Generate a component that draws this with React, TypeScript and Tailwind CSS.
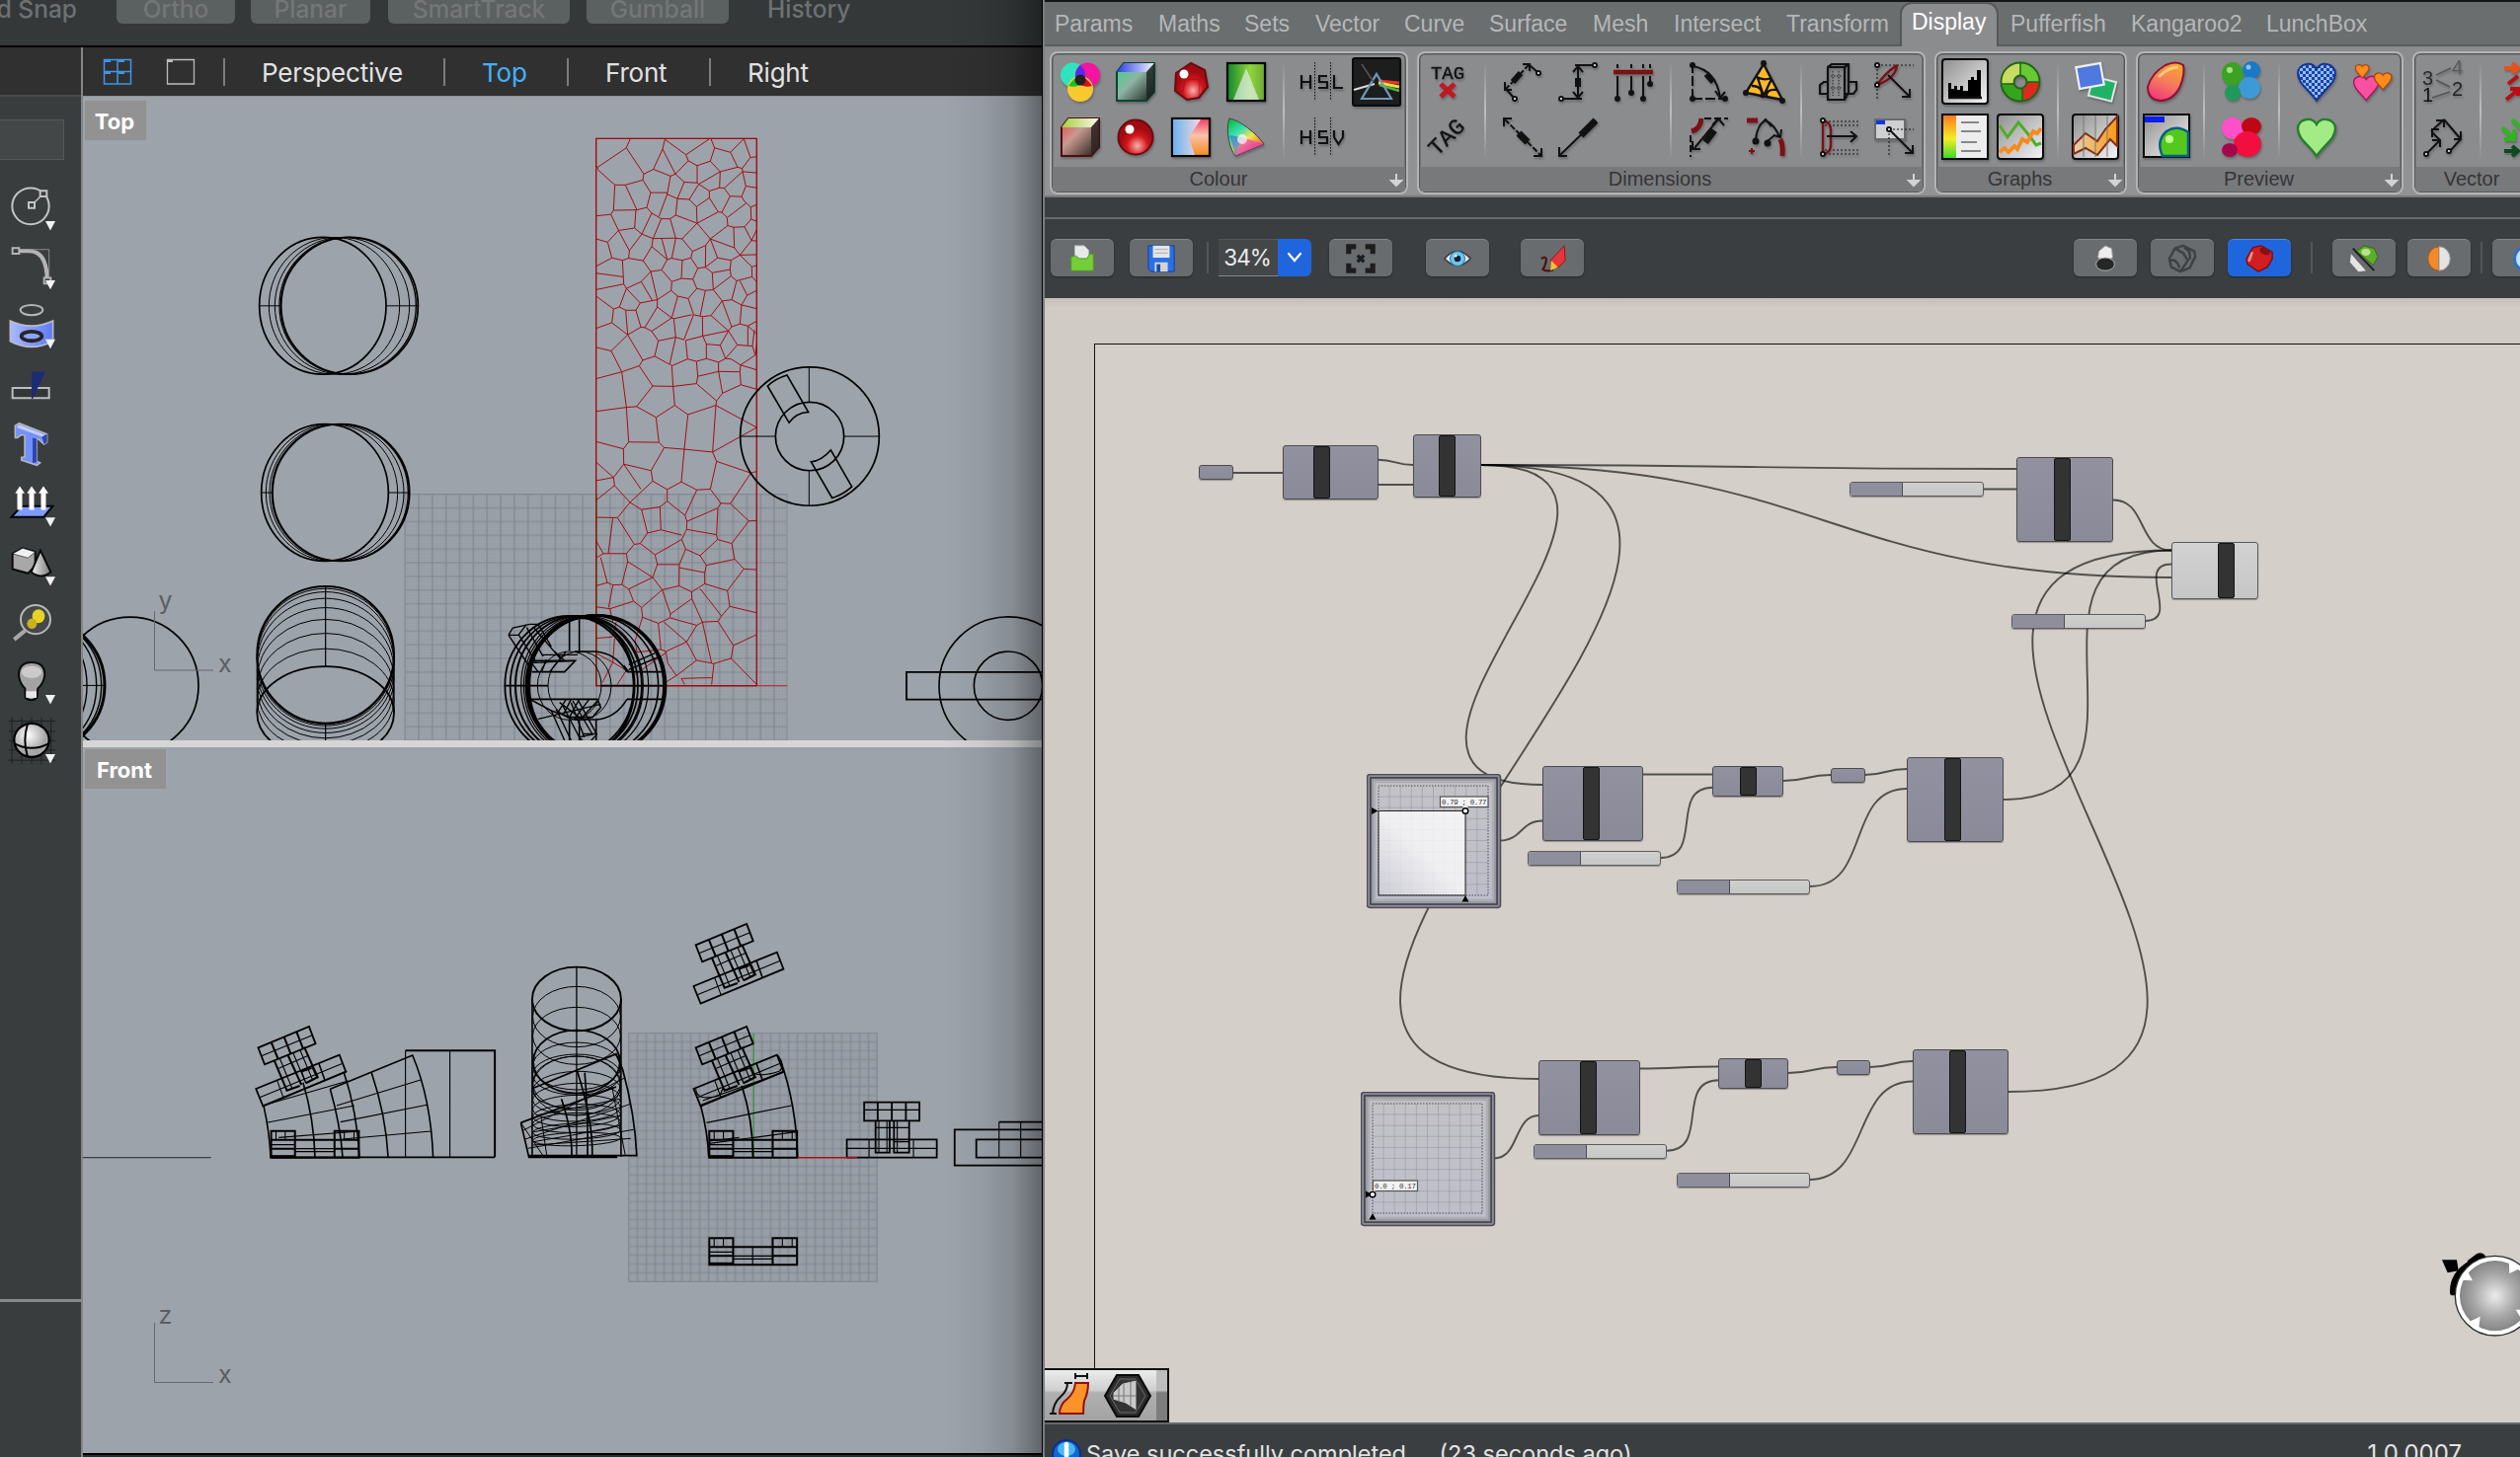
import React from "react";

/* ---------- Modelling window: tool strip ---------- */

const Flyout = ({ y }: { y: number }) => <path d={`M138 ${y} H168 L153 ${y + 20} Z`} fill="#f2f2f2" stroke="none" />;

const toolIcons: React.ReactNode[] = [
  <g key="circle" stroke="#c4c4c4" strokeWidth="2">
    <ellipse cx="93" cy="273" rx="56" ry="39" />
    <path d="M96 271 L132 246" strokeWidth="1.4" />
    <rect x="87" y="265" width="18" height="12" fill="#3a3d3e" />
    <rect x="122" y="240" width="20" height="12" fill="#3a3d3e" />
    <Flyout y={305} />
  </g>,
  <g key="fillet" stroke="#b4b4b4">
    <path d="M58 369 H90 Q143 371 143 432" strokeWidth="4" />
    <path d="M90 366 H149 V430" strokeWidth="1" stroke="#8a8a8a" />
    <rect x="38" y="363" width="20" height="12" fill="#3a3d3e" strokeWidth="2" />
    <rect x="134" y="427" width="20" height="12" fill="#3a3d3e" strokeWidth="2" />
    <Flyout y={432} />
  </g>,
  <g key="surface">
    <ellipse cx="96" cy="496" rx="34" ry="11" stroke="#b4b4b4" strokeWidth="2" />
    <path d="M31 519 Q96 541 161 519 V563 Q96 587 31 563 Z" fill="url(#blueSheen)" stroke="#b9bcc6" strokeWidth="1.6" />
    <ellipse cx="96" cy="552" rx="31" ry="10" stroke="#26262a" strokeWidth="3.8" fill="#8fa3fb" />
    <Flyout y={559} />
  </g>,
  <g key="trim">
    <rect x="38" y="663" width="111" height="22" stroke="#bdbdbd" strokeWidth="2" fill="#333637" />
    <path d="M96 628 H138 L99 687 H96 Z" fill="#1b2b74" />
  </g>,
  <g key="text" stroke="#b8b8b8" strokeWidth="1.5">
    <path d="M58 739 L143 762 V780 L134 784 L117 773 L112 772 V820 L122 824 L112 829 L65 818 V812 L75 811 V765 L64 764 L53 770 H46 L46 744 Z" fill="#7390ff" />
    <path d="M99 770 L112 772 V822 L99 824 Z M127 767 L143 762 V780 L134 784 Z" fill="#2c47ac" stroke="none" />
    <path d="M58 742 L138 764 L128 768 L50 748 Z" fill="#c3ccf6" stroke="none" />
  </g>,
  <g key="extrude">
    <path d="M35 940 L65 917 H160 L133 940 Z" fill="#7e9bff" stroke="#050505" strokeWidth="2" />
    <g stroke="#fff" strokeWidth="5"><path d="M60 925 V888 M96 925 V888 M132 925 V888" /></g>
    <path d="M46 889 L60 874 L75 889 Z M82 889 L96 874 L111 889 Z M117 889 L132 874 L147 889 Z" fill="#fff" />
    <Flyout y={941} />
  </g>,
  <g key="solids" stroke="#0a0a0a" strokeWidth="2">
    <path d="M38 1019 L69 1007 L107 1015 V1044 L85 1061 L38 1052 Z" fill="#a8a8a8" />
    <path d="M38 1019 L69 1007 L107 1015 L85 1028 Z" fill="#f0f0f0" strokeWidth="0.6" />
    <path d="M123 1012 L95 1058 Q125 1075 154 1058 Z" fill="url(#metal)" />
    <Flyout y={1068} />
  </g>,
  <g key="magnify">
    <ellipse cx="108" cy="1160" rx="45" ry="31" stroke="#b8b8b8" strokeWidth="2" fill="#45484a" />
    <ellipse cx="117" cy="1153" rx="19" ry="15" fill="#e6d326" />
    <ellipse cx="97" cy="1169" rx="15" ry="11" fill="#c9b21f" />
    <path d="M76 1184 L43 1203" stroke="#a8a8a8" strokeWidth="4" />
  </g>,
  <g key="light" stroke="#0a0a0a" strokeWidth="2">
    <path d="M57 1280 Q57 1252 96 1252 Q136 1252 136 1280 Q132 1298 115 1308 L112 1328 Q95 1338 77 1328 L76 1308 Q60 1298 57 1280 Z" fill="#a3a3a3" />
    <ellipse cx="96" cy="1273" rx="31" ry="13" fill="#cbcbcb" stroke="none" />
    <path d="M79 1314 H111 V1328 H79 Z" fill="#e8e8e8" stroke="none" />
    <Flyout y={1322} />
  </g>,
  <g key="render">
    <g stroke="#1f2122" strokeWidth="1">
      <path d="M26 1378 H168 M26 1400 H168 M26 1420 H168 M26 1440 H168 M26 1462 H168 M36 1370 V1470 M66 1370 V1470 M96 1370 V1470 M126 1370 V1470 M155 1370 V1470" />
    </g>
    <ellipse cx="96" cy="1419" rx="53" ry="36" fill="url(#ball)" stroke="#000" strokeWidth="2.2" />
    <path d="M43 1426 Q96 1446 149 1426 M84 1384 Q68 1420 84 1454" stroke="#000" strokeWidth="2" />
    <Flyout y={1449} />
  </g>,
];

const ToolStrip = () => (
  <aside className="flex w-[82px] shrink-0 flex-col bg-[#393d3e]">
    <div className="h-[50px] border-b-2 border-[#484a4b] bg-[#303030]" />
    <div className="mt-[23px] h-[41px] w-[65px] border border-l-0 border-[#565959] bg-[#444748]" />
    <div className="mt-[17px] flex flex-col">
      {toolIcons.map((icon, i) => (
        <svg key={i} className="block h-[60px] w-[82px] [&_*]:[vector-effect:non-scaling-stroke]" fill="none" preserveAspectRatio="none" viewBox={`0 ${209.8 + 127.1 * i} 246 127.1`}>
          {icon}
        </svg>
      ))}
    </div>
    <div className="mt-[537px] h-[3px] bg-[#878a8a]" />
  </aside>
);

/* ---------- Modelling window: viewports ---------- */

const voronoi =
  "M131 50H619V1408H131ZM235 50L223 73 136 121 131 118M136 121L136 127 188 165 220 165 273 153 276 138 223 73M276 138L305 126 333 76 340 52M333 76L372 138M305 126L357 143 372 138 411 105 404 90 340 52M404 90L475 51M480 51L491 73 478 106 438 117 411 105M491 73L539 84 578 52M580 51L600 97 619 95M539 84L561 121 575 124 600 97M478 106L508 132 561 121M575 124L576 132 619 135M576 132L520 173 506 172 508 132M438 117L438 160 443 163 508 132M443 163L475 180 506 172M438 160L399 158 372 138M399 158L378 199 347 188 357 143M378 199L414 201 443 163M347 188L345 184 297 184 273 153M297 184L285 221 255 227 220 165M255 227L184 228 188 165M184 228L176 238 131 242M176 238L199 278 248 272 252 227M285 221L300 235 329 249M347 188L322 243M300 235L270 287 248 272M270 287L232 328 199 278 166 307 131 299M166 307L179 346 131 367M179 346L211 352 230 347 232 328M211 352L215 411 131 425M131 384L213 393M215 411L223 422 202 468 184 473 131 441M223 422L268 405 297 380 274 353 230 347M274 353L300 318 304 298 270 287M304 298L329 249 356 249 373 240 378 199M356 249L373 297 304 298M373 240L438 260 436 219 414 201M436 219L475 197 475 180M475 197L502 232 438 260 478 299 531 266 529 246 513 233 502 232M513 233L538 193 520 173M538 193L573 194 586 168 576 132M586 168L619 172M573 194L582 206 601 220 619 214M529 246L586 211M601 220L602 250 582 269 549 270 531 266M602 250L619 255M549 270L551 321 478 299M582 269L603 303 619 276M603 303L619 304M603 303L568 339 551 321M568 339L619 338M568 339L541 352 500 346 478 299M478 299L464 315 424 330 392 299 373 297M392 299L438 260M464 315L463 369 500 346M424 330L419 346 440 372 463 369 484 383 538 375 541 352M419 346L393 352 361 347 373 297M361 347L347 350 332 303 330 299M347 350L300 318M393 352L390 397 425 399 440 372M347 350L330 376 297 380M330 376L361 405 390 397M361 405L359 427 317 450 297 380M268 405L302 452 317 450M302 452L265 458 223 422M265 458L252 476 221 476 202 468M252 476L267 518 279 519 317 468 317 450M221 476L227 537 267 518M184 473L179 507 227 537 177 577 131 568M179 507L131 521M359 427L379 441 361 495 317 468M379 441L411 447 437 422 425 399M437 422L463 427 487 425 484 383M487 425L541 391 538 375M541 391L558 403 605 393 604 368 568 339M604 368L619 365M605 393L619 406M558 403L543 450 514 453 487 425M568 403L590 439 619 427M590 439L573 463 543 450M573 463L619 472M573 463L568 510 592 515 619 503M568 510L543 517 514 453M514 453L480 489 454 492 427 487 411 447M463 427L447 490M361 495L367 497 422 487M367 497L373 543 398 549 427 487M454 492L455 540 403 551M455 540L533 527 480 489M533 527L543 517M533 527L508 563 466 560 455 540M533 527L560 562 606 565 612 525M592 515L592 563M606 565L615 587 619 560M592 515L619 535M560 562L524 596 508 563M524 596L541 597 570 612 615 587M524 596L503 605 466 596 466 560M466 596L436 603 409 597 403 551M409 597L361 614 355 608 373 543 320 552 300 528 279 519M300 528L361 495M320 552L309 590 273 600 262 614 209 629 177 577M273 600L227 537M309 590L355 611M262 614L303 664 365 665 361 614M303 664L254 715 223 717 209 629 131 646M223 717L131 727M223 717L230 803 214 820 131 802M230 803L322 804 313 742 254 715M313 742L370 712 365 665 436 658 440 640 436 603M440 640L503 628 503 605M503 628L568 629 570 612 619 624M568 629L571 661 619 672M571 661L515 682 503 628M515 682L497 701 436 658M497 701L495 712 410 735 370 712M495 712L619 767 485 828 399 821 410 735M495 712L485 828M322 804L338 817 399 821 390 902 347 921 303 900 298 874 338 817M298 874L215 858 214 820M215 858L184 891 131 853M184 891L131 899M184 891L187 911 234 953 303 900M215 858L267 920M187 911L131 948M234 953L196 991 131 990M234 953L269 971 325 964 347 950 347 921M347 950L401 985 437 922 390 902M437 922L478 920 497 851 485 828M497 851L601 880 619 876M601 880L539 956 510 955 478 920M510 955L501 967 407 1000 401 985M501 967L497 1033 406 1020 407 1000M539 956L595 999 619 998M595 999L543 1055 500 1045 497 1033M500 1045L447 1085 403 1069 391 1045 406 1020M391 1045L310 1083 265 1055 287 1029 269 971M287 1029L328 1021 325 964M328 1021L391 1034M265 1055L247 1057 196 991M247 1057L223 1080 153 1080 131 1048M182 991L168 1080M153 1080L131 1091M145 1090L165 1152 131 1160M165 1152L182 1158 209 1157 227 1100 223 1080M227 1100L303 1139 317 1107 310 1083M317 1107L384 1107 403 1069M384 1107L383 1160 332 1170 303 1139 230 1168 209 1157M384 1115L461 1127 466 1109 447 1085M466 1109L552 1094 543 1055M552 1094L580 1118 619 1120M580 1118L530 1172 461 1155 461 1127M461 1155L421 1175 383 1160M421 1175L422 1192 357 1230 332 1170 269 1214 245 1198 230 1168M245 1198L173 1217 131 1212M182 1158L169 1214M173 1217L182 1250M269 1214L272 1238 320 1253 355 1240 357 1230M357 1240L437 1258 454 1250 422 1192M447 1167L512 1235 537 1211 530 1172M537 1211L619 1227M512 1235L501 1248 454 1250 482 1352 436 1345 406 1299 437 1258M501 1248L548 1308 619 1281M548 1308L541 1340 489 1353 482 1352M541 1340L619 1405M489 1353L482 1405M482 1388L390 1390 400 1405M337 1250L406 1299 343 1323 328 1318 320 1253M343 1323L349 1352 375 1383 436 1345M375 1383L345 1398M272 1238L250 1295 255 1325 328 1318M131 1290L180 1287 192 1250M187 1290L182 1350 131 1327M182 1350L223 1370 195 1405M182 1350L150 1400M250 1380L345 1325";

/* Ellipse described by its left and right extents. */
const Span = ({ l, r, cy, ry, w = 1 }: { l: number; r: number; cy: number; ry: number; w?: number }) => (
  <ellipse cx={(l + r) / 2} cy={cy} rx={(r - l) / 2} ry={ry} strokeWidth={w} />
);

const GridPattern = ({ id, x, y, size }: { id: string; x: number; y: number; size: number }) => {
  const s = size / 5;
  return (
    <pattern id={id} x={x} y={y} width={size} height={size} patternUnits="userSpaceOnUse">
      <path d={`M${s} 0V${size}M${2 * s} 0V${size}M${3 * s} 0V${size}M${4 * s} 0V${size}M0 ${s}H${size}M0 ${2 * s}H${size}M0 ${3 * s}H${size}M0 ${4 * s}H${size}`} stroke="#91979f" strokeWidth="0.5" />
      <path d={`M0 0V${size}M${size} 0V${size}M0 0H${size}M0 ${size}H${size}`} stroke="#7f848e" strokeWidth="1.2" />
    </pattern>
  );
};

const TopView = () => (
  <svg className="block h-full w-full [&_*]:[vector-effect:non-scaling-stroke]" viewBox="84 98 972 652" preserveAspectRatio="none" fill="none" stroke="#000">
    <defs><GridPattern id="gridTop" x={604} y={694.7} size={13.85} /></defs>
    <rect x="410" y="500.5" width="387" height="250" fill="url(#gridTop)" stroke="#868b95" strokeWidth="1" />
    <g transform="matrix(.33333 0 0 .40816 560 120)">
      <path d="M133 932V1408" stroke="#2f9a35" strokeWidth="1.2" />
      <path d="M131 1408H712" stroke="#b23a40" strokeWidth="1.3" />
      <path d={voronoi} stroke="#a50d12" strokeWidth="1" />
      <path d="M131 50H619V1408H131Z" stroke="#a00a0e" strokeWidth="1.2" />
      <ellipse cx="780" cy="789" rx="211" ry="172" strokeWidth="1.7" />
      <ellipse cx="780" cy="789" rx="104" ry="85" strokeWidth="1.7" />
      <path d="M778 618V705M778 875V961M569 789H676M884 789H991" />
      <path d="M652 664Q675 646 711 637L776 729Q740 730 717 755ZM784 852Q815 850 844 823L908 914Q880 934 848 942Z" strokeWidth="1.6" />
      <ellipse cx="1383" cy="1408" rx="210" ry="171" strokeWidth="1.6" />
      <ellipse cx="1383" cy="1408" rx="104" ry="85" strokeWidth="1.6" />
      <path d="M1490 1374H1074V1442H1490" strokeWidth="1.8" />
    </g>
    <g transform="matrix(.33333 0 0 .4719 0 80)">
      <Span l={788} r={1173} cy={487} ry={147} w={1.7} />
      <Span l={817} r={1214} cy={487} ry={147} />
      <Span l={835} r={1244} cy={487} ry={147} />
      <Span l={849} r={1264} cy={487} ry={147} w={1.3} />
      <Span l={854} r={1270} cy={487} ry={147} w={1.8} />
      <path d="M788 487H852M1173 487H1270" />
      <Span l={794} r={1180} cy={888} ry={147} w={1.7} />
      <Span l={808} r={1208} cy={888} ry={147} />
      <Span l={819} r={1227} cy={888} ry={147} />
      <Span l={826} r={1240} cy={888} ry={147} w={1.3} />
      <Span l={828} r={1244} cy={888} ry={147} w={1.8} />
      <path d="M794 888H828M1180 888H1244" />
      <ellipse cx="989" cy="1236" rx="208" ry="147" strokeWidth="2" />
      {[1094, 1101, 1115, 1135, 1160, 1190, 1223].map((t) => {
        const ry = 147 - (47 * (t - 1089)) / 172;
        return <ellipse key={t} cx="989" cy={t + ry} rx="208" ry={ry} strokeWidth="1" />;
      })}
      <ellipse cx="989" cy="1361" rx="208" ry="100" strokeWidth="1.8" />
      <path d="M781 1236V1361M1197 1236V1361M989 1089V1261M989 1383V1425" strokeWidth="1.2" />
      <ellipse cx="395" cy="1302" rx="208" ry="147" strokeWidth="1.7" />
      <ellipse cx="108" cy="1302" rx="210" ry="147" strokeWidth="3" />
      <Span l={-90} r={308} cy={1302} ry={147} w={1.4} />
      <Span l={-90} r={293} cy={1302} ry={147} w={1.4} />
      <Span l={-90} r={264} cy={1302} ry={147} w={1.4} />
      <path d="M252 1302H318" />
    </g>
    <g transform="matrix(.33333 0 0 .33333 490 600)" strokeWidth="1.6">
      <Span l={64} r={455} cy={284} ry={212} w={1.8} />
      <Span l={80} r={468} cy={284} ry={212} w={1.7} />
      <Span l={96} r={480} cy={284} ry={212} w={2} />
      <Span l={113} r={484} cy={284} ry={212} w={1.2} />
      <Span l={121} r={500} cy={284} ry={212} w={1.2} />
      <Span l={127} r={530} cy={284} ry={213} w={1.6} />
      <Span l={131} r={547} cy={284} ry={214} w={2.4} />
      <Span l={134} r={552} cy={284} ry={214} w={2.8} />
      <Span l={138} r={457} cy={284} ry={206} w={2.4} />
      <Span l={163} r={357} cy={284} ry={104} />
      <Span l={195} r={387} cy={284} ry={104} />
      <path d="M275 180H340Q400 185 435 242M275 387H340Q400 383 435 325M435 242H550M435 325H550M145 242H245L278 208H150Q145 225 135 225M140 325H345L355 350 330 380H265L205 360 140 325M64 284H195M355 284H555M260 85V178M290 82V185M260 388V452M290 388V452M341 388V452" />
      <path d="M75 130L88 108 140 97 165 97 205 165M75 130L140 228M105 128L160 215M75 130H105L130 97M130 107L180 195M150 105L235 205M140 215L275 208M175 190H285M190 205L175 242M145 215L165 242M215 180L245 208M250 180L200 242M165 385L355 340M205 360L245 450M220 355L265 450M240 345L295 450M265 335L305 440M285 325L343 432 325 452H300L290 440 330 432 270 330M300 430H343M250 325L225 365 265 385M265 325L240 375M290 325L260 380M320 325L275 385M345 330L295 385M230 335L300 387M440 220L520 185M440 235L535 195M440 242L425 222" strokeWidth="1.4" />
    </g>
    <path d="M156.500 619V679H216" stroke="#65696e" strokeWidth="1" />
    <g fill="#5b5e61" stroke="none" fontFamily="Inter, sans-serif" fontSize="25"><text x="160.500" y="617">y</text><text x="221" y="681">x</text></g>
  </svg>
);

const Tower = ({ dx = 0, dy = 0 }: { dx?: number; dy?: number }) => (
  <g transform={`translate(${dx} ${dy})`}>
    <path d="M920 172L1014 108 1026 160 932 223ZM916 297L1070 194 1082 245 929 350Z" strokeWidth="1.8" />
    <path d="M944 155L957 207M968 140L980 190M991 124L1003 175M950 212L973 302 997 288M1005 170L1030 262 1008 280M975 195L1000 285" strokeWidth="2" />
    <path d="M926 197L1020 134M960 205L983 297M985 190L1008 280M997 178L1020 268M923 323L1076 220M955 272L967 325M1000 243L1020 233 1028 262 1008 278ZM958 235L1014 195" strokeWidth="1.100" />
    <path d="M1032 220L1043 270M1000 245L1018 235" strokeWidth="1.6" />
  </g>
);

const Clamp = ({ dx = 0, dy = 0 }: { dx?: number; dy?: number }) => (
  <g transform={`translate(${dx} ${dy})`}>
    <path d="M945 1063H989V1144H945ZM1062 1063H1107V1144H1062ZM945 1090H1107M945 1117H989M1062 1117H1107M945 1144H1107" strokeWidth="2" />
    <path d="M954 1063V1090M971 1063V1090M1080 1063V1090M1098 1063V1090M1025 1090V1144M945 1105H989M989 1117H1062M989 1126H1062" strokeWidth="1.100" />
    <path d="M945 1141H989" strokeWidth="3" />
  </g>
);

const FrontView = () => (
  <svg className="block h-full w-full [&_*]:[vector-effect:non-scaling-stroke]" viewBox="84 757 972 715" preserveAspectRatio="none" fill="none" stroke="#000">
    <defs><GridPattern id="gridFront" x={762.5} y={1172.5} size={9} /></defs>
    <rect x="636.5" y="1046.500" width="252" height="252" fill="url(#gridFront)" stroke="#868b95" />
    <g transform="matrix(.54847 0 0 .33333 200 900)" strokeWidth="1.1">
      <path d="M-212 818H25" stroke="#3a3d40" />
      <path d="M1027 440V817" stroke="#2f9a35" />
      <Tower />
      <Tower dy={312} />
      <Tower dx={-808} dy={312} />
      <Clamp />
      <Clamp dy={-326} />
      <Clamp dx={-809} dy={-326} />
      <path d="M122 659Q133 740 135 817H549M195 590Q215 700 217 817M270 557Q295 680 299 817M245 610L397 507Q431 640 435 817M245 610Q264 720 268 817M321 558Q348 690 352 817" strokeWidth="1.6" />
      <path d="M122 659L278 585M122 659L276 556M128 712L290 660M150 757L299 738M257 660L412 582M264 710L424 658M268 762L431 738M466 493V817M384 493V817" />
      <path d="M384 493H549V817" strokeWidth="2" />
      <ellipse cx="700" cy="336" rx="82" ry="97" strokeWidth="1.9" />
      <ellipse cx="700" cy="527" rx="80" ry="96" strokeWidth="1.8" />
      {[[390, 92], [448, 87], [540, 72], [566, 62], [592, 82], [612, 56], [640, 48], [668, 40], [600, 90], [690, 34], [712, 30], [738, 24], [762, 20]].map(([cy, ry]) => (
        <ellipse key={cy} cx="700" cy={cy} rx="81" ry={ry} strokeWidth="1" transform={cy > 600 ? `rotate(-3 700 ${cy})` : undefined} />
      ))}
      <path d="M618 336V815M782 336V815" strokeWidth="1.600" />
      <path d="M700 240V815" strokeWidth="1.300" />
      <path d="M597 712L773 603M618 608L773 503L785 550M597 712L612 817H775M700 550Q730 700 729 812M672 640Q692 740 691 812M785 550Q808 690 811 812H612M715 560Q722 700 720 812" strokeWidth="1.7" />
      <path d="M602 735L790 575M605 762L800 655M610 790L805 733M620 780L800 760M635 700L645 812M765 600L790 812M597 712L640 817M620 740Q700 720 782 690M620 770Q700 750 782 720M625 690L780 640" strokeWidth="1" />
      <path d="M929 659Q942 740 944 817M1005 600Q1025 700 1026 817M1076 520Q1106 660 1108 817" strokeWidth="1.7" />
      <path d="M929 659L1083 557M933 645L1080 560M940 712L1097 660M945 775L1105 740M945 768L1000 757M1072 508Q1085 540 1075 555 1040 575 1025 560M920 610Q922 650 965 628L972 600" strokeWidth="1.2" />
      <path d="M1231 650H1333V706H1231ZM1256 650V706M1282 650V706M1308 650V706M1252 706V803H1278V706M1286 706V803H1314V706M1199 763H1365V818H1199Z" strokeWidth="1.8" />
      <path d="M1231 673H1333M1240 763V818M1322 763V818M1199 790H1365M1252 727H1314M1258 706V803M1273 706V803M1292 706V803M1286 770H1314" />
      <path d="M1560 733H1398V842H1560M1560 763H1438V818H1560M1480 710H1560" strokeWidth="1.8" />
      <path d="M1480 710V818M1520 710V818" />
      <path d="M1108 818H1218" stroke="#b01015" strokeWidth="1.500" />
    </g>
    <path d="M156.500 1340V1400.500H216" stroke="#65696e" />
    <g fill="#5b5e61" stroke="none" fontFamily="Inter, sans-serif" fontSize="25"><text x="160.500" y="1341">z</text><text x="221" y="1401">x</text></g>
  </svg>
);

const viewTabs = [
  { label: "Perspective", cls: "w-[223px] text-[#e2e2e2]" },
  { label: "Top", cls: "w-[125px] text-[#43b0fd]" },
  { label: "Front", cls: "w-[144px] text-[#e2e2e2]" },
  { label: "Right", cls: "w-[146px] text-[#e2e2e2]" },
];

const snapButtons = [
  { label: "Ortho", cls: "ml-[40px] w-[120px]" },
  { label: "Planar", cls: "ml-[16px] w-[121px]" },
  { label: "SmartTrack", cls: "ml-[18px] w-[184px]" },
  { label: "Gumball", cls: "ml-[17px] w-[144px]" },
];

const ModelWindow = () => (
  <section className="relative flex h-full w-[1056px] shrink-0 flex-col overflow-hidden bg-[#343839] font-['Inter',sans-serif]">
    <div className="flex h-[48px] shrink-0 items-start border-b-2 border-black text-[24.500px] font-medium leading-[26px] text-[#6d7172]">
      <div className="-mt-[4px] flex w-[78px] justify-end whitespace-nowrap">d Snap</div>
      {snapButtons.map((b) => (
        <div key={b.label} className={`${b.cls} flex h-[24px] justify-center rounded-b-[6px] bg-[#5b6061] text-[#737778]`}>
          <span className="-mt-[4px]">{b.label}</span>
        </div>
      ))}
      <div className="-mt-[4px] ml-[39px]">History</div>
    </div>
    <div className="flex min-h-0 flex-1">
      <ToolStrip />
      <div className="flex w-[974px] flex-col border-l-2 border-[#858585]">
        <div className="flex h-[50px] shrink-0 items-center border-b border-[#8f8f8f] bg-[#303030] pt-[1px] text-[26px] leading-[30px]">
          <svg className="ml-[20px] h-[28px] w-[30px]" viewBox="0 0 30 28" fill="none" stroke="#3f95e6" strokeWidth="1.5">
            <path d="M1.500 1.500H28.500V26H1.500ZM15 1.500V26M1.500 13.500H28.500" /><path d="M2 3H8M16 3H22M2 15H8M16 15H22" strokeWidth="2" />
          </svg>
          <svg className="ml-[34px] h-[28px] w-[30px]" viewBox="0 0 30 28" fill="none" stroke="#bdbdbd" strokeWidth="1.300">
            <path d="M1.500 1.500H28.500V26H1.500Z" /><path d="M2 3H7" strokeWidth="2" />
          </svg>
          <div className="ml-[28px] flex">
            {viewTabs.map((t) => (
              <div key={t.label} className={`${t.cls} flex h-[28px] items-center border-l-2 border-[#7c7c7c] pl-[37px] pt-[2px] tracking-[-0.2px]`}>{t.label}</div>
            ))}
          </div>
        </div>
        <div className="relative h-[652px] shrink-0 bg-[#9ca3ab]">
          <TopView />
          <div className="absolute left-[2px] top-[4px] flex h-[40px] w-[62px] items-center justify-center bg-[#929292] pr-[2px] pt-[2px] text-[22px] font-bold text-white">Top</div>
        </div>
        <div className="h-[7px] shrink-0 bg-[#d6d6d6]" />
        <div className="relative h-[715px] shrink-0 bg-[#9ca3ab]">
          <FrontView />
          <div className="absolute left-[2px] top-[2px] flex h-[40px] w-[82px] items-center justify-center bg-[#929292] pr-[2px] pt-[2px] text-[22px] font-bold text-white">Front</div>
        </div>
        <div className="flex-1 border-t-2 border-black bg-[#2c2c2e]" />
      </div>
    </div>
    <div className="pointer-events-none absolute inset-y-0 right-0 w-[100px] border-r border-black bg-[linear-gradient(to_right,rgba(0,0,0,0)_0%,rgba(0,0,0,0.05)_40%,rgba(0,0,0,0.14)_70%,rgba(0,0,0,0.38)_100%)]" />
  </section>
);

/* ---------- Node editor: ribbon icons (40 x 40 artboard) ---------- */

const Icon = ({ children }: { children?: React.ReactNode }) => (
  <div className="flex h-[56px] w-[56px] items-center justify-center">
    <svg className="h-[50px] w-[50px] drop-shadow-[1px_2px_1px_rgba(0,0,0,0.25)]" viewBox="-5 -5 50 50" fill="none" stroke="#111" strokeWidth="2">
      {children}
    </svg>
  </div>
);

const heart = "M20 39C12 27 1 22 1 11C1 2 15-2 20 7C25-2 39 2 39 11C39 22 28 27 20 39Z";

const I = {
  cmy: (
    <Icon><g stroke="none"><circle cx="12.5" cy="13" r="12.5" fill="#2fe3bd" /><circle cx="27.500" cy="13" r="12.5" fill="#f514a0" /><circle cx="20" cy="27" r="13" fill="#f8c92e" /><path d="M20 3A12.500 12.500 0 0 1 20 23A12.500 12.500 0 0 1 20 3" fill="#5b28f0" /><path d="M8 24Q14 15 20 14L20 23Q14 26 8 24" fill="#12c422" /><path d="M32 24Q26 15 20 14V23Q26 26 32 24" fill="#d80f1c" /><circle cx="20" cy="18" r="5.500" fill="#222" /></g></Icon>
  ),
  cubeG: (
    <Icon><path d="M1 10L8 1H39V30L31 39H1Z" fill="url(#cubeG)" stroke="#0c4430" /><path d="M1 10L8 1H39L31 10Z" fill="url(#cubeGTop)" stroke="none" /><path d="M31 10L39 1V30L31 39Z" fill="#1c2320" opacity=".8" stroke="none" /></Icon>
  ),
  gem: (
    <Icon><path d="M20 1L34 8 37 25 28 36 16 38 4 29 5 11Z" fill="url(#redBall)" stroke="#6d0a0e" /><path d="M5 11L14 18 12 30 4 29M14 18L29 17 34 8M29 17L28 36" stroke="#8f1117" strokeWidth="1" opacity=".5" /><circle cx="13" cy="12" r="4.500" fill="#fff" stroke="none" /></Icon>
  ),
  gradG: (
    <Icon><rect x="1" y="1" width="38" height="38" fill="url(#gradG)" stroke="#050505" strokeWidth="2.200" /><path d="M20 6L33 38H7Z" fill="#e8f0fb" opacity=".65" stroke="none" /></Icon>
  ),
  cubeR: (
    <Icon><path d="M1 10L8 1H39V30L31 39H1Z" fill="url(#cubeR)" stroke="#4c0e10" /><path d="M1 10L8 1H39L31 10Z" fill="url(#cubeRTop)" stroke="none" /><path d="M31 10L39 1V30L31 39Z" fill="#2b2525" opacity=".85" stroke="none" /></Icon>
  ),
  ball: (
    <Icon><circle cx="20" cy="20" r="17.500" fill="url(#redBall)" stroke="#6d0a0e" /><circle cx="14" cy="12" r="4.500" fill="#fff" stroke="none" /></Icon>
  ),
  gradO: (
    <Icon><rect x="1" y="1" width="38" height="38" fill="url(#gradO)" stroke="#050505" strokeWidth="2.200" /><path d="M2 2H30L18 20 24 38H2Z" fill="url(#gradB)" stroke="none" /></Icon>
  ),
  gamut: (
    <Icon><path d="M3 1C-2 15 5 34 9 39L38 27C30 16 14 3 3 1Z" fill="url(#gamut)" stroke="#444" strokeWidth="1" /><path d="M9 39L38 27 16 20Z" fill="#e62fd0" opacity=".6" stroke="none" /><path d="M9 39L3 18 16 20Z" fill="#3466f0" opacity=".6" stroke="none" /><circle cx="16" cy="22" r="5" fill="#fff" opacity=".7" stroke="none" /></Icon>
  ),
  hsl: (
    <Icon><path d="M0 13V27M0 20H9M9 13V27M26 14H18V20H26V26H17M33 13V26H42" strokeWidth="2.200" /><path d="M13.500 0V38M29.500 0V38" strokeWidth="1" strokeDasharray="1.500 1.500" /></Icon>
  ),
  hsv: (
    <Icon><path d="M0 13V27M0 20H9M9 13V27M26 14H18V20H26V26H17M33 13V20L37.500 27 42 20V13" strokeWidth="2.200" /><path d="M13.500 0V38M29.500 0V38" strokeWidth="1" strokeDasharray="1.500 1.500" /></Icon>
  ),
  prism: (
    <Icon><rect x="-4" y="-4" width="48" height="48" rx="2" fill="#1d1d1e" stroke="#0a0a0a" /><path d="M-3 28L18 22" stroke="#ddd" strokeWidth="2" /><path d="M22 19L43 21" stroke="#e3352a" strokeWidth="2.800" /><path d="M22 21L43 25" stroke="#f5dc35" strokeWidth="2.800" /><path d="M23 23L43 29" stroke="#49b648" strokeWidth="2.400" /><path d="M20 12L35 37H5Z" stroke="#6d9ab5" strokeWidth="2.200" /><path d="M5 2L17 20" stroke="#555" strokeWidth="1.500" /></Icon>
  ),
  tagX: (
    <Icon><text x="20" y="17" textAnchor="middle" fontFamily="Liberation Mono, monospace" fontSize="19" fill="#111" stroke="#111" strokeWidth=".4">TAG</text><path d="M13 22L27 35M27 22L13 35" stroke="#c01822" strokeWidth="5" /></Icon>
  ),
  tag: (
    <Icon><text transform="translate(24 25) rotate(-45)" textAnchor="middle" fontFamily="Liberation Mono, monospace" fontSize="23" fill="#111" stroke="#111" strokeWidth=".4">TAG</text></Icon>
  ),
  dimAligned: (
    <Icon><path d="M3 27L26 3" strokeDasharray="5 2" /><path d="M10 20L18 11" strokeWidth="6" /><path d="M2 20V28H9M20 2H27V9M27 3L35 10M3 27L11 36" /><circle cx="36" cy="11" r="2" fill="#fff" /><circle cx="12" cy="37" r="2" fill="#fff" /></Icon>
  ),
  dimVert: (
    <Icon><path d="M17 3H36M4 37H24M20 5V36" /><path d="M20 16V25" strokeWidth="6" /><path d="M15 10L20 4 25 10M15 30L20 36 25 30" /><circle cx="37" cy="3" r="2" fill="#fff" /><circle cx="3" cy="37" r="2" fill="#fff" /></Icon>
  ),
  dimComb: (
    <Icon><path d="M0 10H40" stroke="#7b1015" strokeWidth="4.500" /><path d="M4 14V37M18 14V30M30 14V37M37 14V22M4 2V6M18 2V6M30 2V6M37 2V6" /><g fill="#111" stroke="none"><circle cx="4" cy="37" r="3" /><circle cx="18" cy="31" r="3" /><circle cx="30" cy="37" r="3" /><circle cx="37" cy="22" r="3" /></g></Icon>
  ),
  dimLine: (
    <Icon><path d="M2 2L38 38" strokeDasharray="6 2" /><path d="M16 16L25 25" strokeWidth="7" /><path d="M1 9V1H9M31 39H39V31" /></Icon>
  ),
  dimArrow: (
    <Icon><path d="M2 38L38 3" /><path d="M23 18L38 3" strokeWidth="7" /><path d="M1 30V39H9" /></Icon>
  ),
  dimAngle: (
    <Icon><path d="M4 37V3M4 37H38" strokeDasharray="10 3" /><path d="M4 4Q28 8 32 36" /><path d="M18 12L25 20" strokeWidth="6" /><path d="M27 29L32 36 37 30" /><g fill="#111" stroke="none"><circle cx="4" cy="3" r="3" /><circle cx="4" cy="37" r="3" /><circle cx="37" cy="37" r="3" /></g></Icon>
  ),
  dimTri: (
    <Icon><path d="M20 2L39 38 2 31Z" fill="#fdb927" strokeWidth="2.400" /><path d="M13 15Q20 19 28 16M8 24Q20 24 18 36M33 28Q22 27 23 35M14 16L20 34 28 17" strokeWidth="2.300" /><g fill="#111" stroke="none"><circle cx="20" cy="1" r="3" /><circle cx="2" cy="31" r="3" /><circle cx="39" cy="39" r="3" /></g></Icon>
  ),
  dimArc: (
    <Icon><path d="M3 14Q12 12 13 1" stroke="#7b1015" strokeWidth="5" /><path d="M16 1H40M2 18V40" strokeDasharray="7 3" /><path d="M6 31L30 2M24 8L30 1 36 8M4 24V32H12" /><path d="M17 25L26 13" strokeWidth="7" /></Icon>
  ),
  dimCurve: (
    <Icon><path d="M3 3H14M37 22Q40 28 39 39" stroke="#7b1015" strokeWidth="5" /><path d="M12 23Q13 8 22 3Q32 8 36 20M16 8L22 2 28 9M30 18L37 20 38 12" /><path d="M24 24L31 18" /><path d="M5 34H11M8 31V37" stroke="#7b1015" /><circle cx="12" cy="24" r="2.500" fill="#111" /><circle cx="24" cy="26" r="2.500" fill="#111" /></Icon>
  ),
  boxes: (
    <Icon><path d="M9 5L13 2H30V31L26 38H9ZM9 5H26V38M26 5L30 2M9 20H5L1 23V32H9M30 20H38V28L35 32H26" strokeWidth="2.200" /><path d="M14 9V34M20 9V34M12 14H24M12 26H24" strokeWidth=".9" strokeDasharray="1.500 1.500" /></Icon>
  ),
  curveDir: (
    <Icon><path d="M3 3H40M3 3V38" strokeWidth="1" strokeDasharray="2 2" /><path d="M23 3Q22 16 3 23Q10 12 23 3" stroke="#7b1015" strokeWidth="2.500" /><path d="M14 13L36 35M28 35H36V27" /><circle cx="3" cy="3" r="2" fill="#fff" /><circle cx="3" cy="23" r="2" fill="#fff" /></Icon>
  ),
  bracket: (
    <Icon><path d="M6 4H40M6 8H40M6 33H40M6 37H40" strokeWidth="1" strokeDasharray="2 2" /><path d="M4 3Q12 5 12 12V28Q12 36 4 37Z" stroke="#7b1015" strokeWidth="2.400" /><path d="M8 19H38M32 14L38 19 32 25" /><circle cx="4" cy="3" r="2" fill="#fff" /><circle cx="4" cy="37" r="2" fill="#fff" /></Icon>
  ),
  screenDir: (
    <Icon><rect x="1" y="2" width="30" height="20" fill="#cfd0d2" stroke="#6a6b6d" /><rect x="2" y="3" width="9" height="4" fill="#1034ee" stroke="none" /><path d="M15 12H40M15 12V38" strokeWidth="1" strokeDasharray="2 2" /><path d="M15 12L39 36M31 36H39V28" /><circle cx="15" cy="12" r="2" fill="#fff" /></Icon>
  ),
  histogram: (
    <Icon><rect x="-3" y="-3" width="46" height="45" rx="3" fill="url(#tile)" stroke="#0a0a0a" /><path d="M3 36V21H6V27H9V24H12V28H15V24H18V29H23V18H26V15H29V18H32V8H36V36Z" fill="#000" stroke="none" /><path d="M3 36H37" strokeWidth="2.500" /></Icon>
  ),
  donut: (
    <Icon><g strokeWidth="13"><path d="M20 7A13 13 0 0 1 33 20" stroke="#67c934" /><path d="M33 20A13 13 0 0 1 22 33" stroke="#dd2a1c" /><path d="M22 33A13 13 0 0 1 7 22" stroke="#35a51c" /><path d="M7 22A13 13 0 0 1 20 7" stroke="#c8dc62" /></g><circle cx="20" cy="20" r="19.500" stroke="#1f6414" strokeWidth="1.800" /><circle cx="20" cy="20" r="6.500" stroke="#1f6414" strokeWidth="1.800" /><path d="M20 1V13M27 20H39M22 27V39M1 22H13" stroke="#1f6414" strokeWidth="1.500" /></Icon>
  ),
  photos: (
    <Icon><rect x="15" y="17" width="24" height="20" transform="rotate(14 27 27)" fill="#20b366" stroke="#e4e4e4" /><rect x="2" y="3" width="25" height="22" transform="rotate(-10 14 14)" fill="#4f78e0" stroke="#f0f0f0" strokeWidth="2.200" /></Icon>
  ),
  legend: (
    <Icon><rect x="-3" y="-3" width="46" height="45" fill="#ededed" stroke="#0a0a0a" /><rect x="-2" y="-2" width="13" height="43" fill="url(#legend)" stroke="none" /><path d="M16 5H34M16 14H36M16 25H32M16 34H36" stroke="#888" /></Icon>
  ),
  lines: (
    <Icon><rect x="-3" y="-3" width="46" height="45" rx="3" fill="url(#tile)" stroke="#0a0a0a" /><path d="M-1 8L7 20 18 5 28 17 36 28 41 26" stroke="#4fae26" strokeWidth="3" /><path d="M-1 35L4 31 8 35 14 29 17 32 22 22 27 25 33 14 37 16 41 11" stroke="#f58a1f" strokeWidth="3.800" /></Icon>
  ),
  area: (
    <Icon><rect x="-3" y="-3" width="46" height="45" rx="3" fill="url(#tile)" stroke="#0a0a0a" /><path d="M-2 28L10 16 22 24 30 12 42 -1V29L35 22 22 38 10 31 -2 37Z" fill="url(#areaFill)" stroke="#80301a" /><path d="M8 -2V40M20 -2V40M32 -2V40" stroke="#777" strokeWidth="1" /></Icon>
  ),
  egg: (
    <Icon><path d="M37 3Q30-2 19 3Q5 11 1 25Q1 38 14 39Q28 38 34 24Q39 11 37 3Z" fill="url(#egg)" stroke="#8d1237" /><path d="M32 5Q22 5 12 15" stroke="#ffe39b" strokeWidth="3" opacity=".7" /></Icon>
  ),
  viewBall: (
    <Icon><rect x="-3" y="-3" width="46" height="43" fill="url(#tile)" stroke="#0a0a0a" /><rect x="-2" y="-1" width="20" height="6" fill="#0c1df0" stroke="none" /><path d="M42 39H16Q9 24 20 14Q31 7 42 15Z" fill="#52c91c" stroke="#075f86" strokeWidth="2.500" /><circle cx="23" cy="22" r="4" fill="#c5ff8b" stroke="none" /></Icon>
  ),
  blobsCool: (
    <Icon><g stroke="none"><ellipse cx="11" cy="12" rx="11" ry="12" fill="#3da125" /><circle cx="30" cy="8" r="9" fill="#1d78c6" /><ellipse cx="28" cy="26" rx="11" ry="11" fill="#3c9ad8" /><ellipse cx="11" cy="31" rx="8" ry="8" fill="#1f9a5c" /><circle cx="8" cy="8" r="3" fill="#a8e384" /><circle cx="27" cy="5" r="2.500" fill="#8dc4f0" /></g></Icon>
  ),
  blobsHot: (
    <Icon><g stroke="none"><circle cx="11" cy="11" r="11" fill="#ff4fc9" /><ellipse cx="30" cy="9" rx="10" ry="9" fill="#bf0713" /><ellipse cx="26" cy="27" rx="14" ry="13" fill="#f20f40" /><ellipse cx="8" cy="33" rx="8" ry="7" fill="#a3084c" /></g></Icon>
  ),
  heartB: <Icon><path d={heart} fill="url(#checker)" stroke="#16359a" /></Icon>,
  heartG: <Icon><path d={heart} fill="#a3ec85" stroke="#23802c" strokeWidth="2.400" /></Icon>,
  hearts: (
    <Icon><path d={heart} transform="translate(1 13) scale(.66)" fill="#f951a2" stroke="#a3165a" /><path d={heart} transform="translate(3 2) scale(.36)" fill="#ff8a1c" stroke="#a8480e" strokeWidth="3" /><path d={heart} transform="translate(22 10) scale(.46)" fill="#ff8a1c" stroke="#a8480e" strokeWidth="3" /></Icon>
  ),
  digits: (
    <Icon><g fontFamily="Liberation Sans, sans-serif" fontSize="20" stroke="none"><text x="-1" y="23" fill="#2a2a2a">3</text><text x="-1" y="40" fill="#111">1</text><text x="29" y="34" fill="#222">2</text><text x="29" y="12" fill="#5a5a5a">4</text></g><path d="M13 13L28 6M13 18L27 25M9 36L27 30" stroke="#555" strokeWidth="1.500" /></Icon>
  ),
  vectors: (
    <Icon><path d="M3 37L17 23M17 23L9 15M8 14L21 2M21 2L38 22M38 22L28 33M9 23H17V30M9 20V12H16M13 3H21V10M38 14V22H31" /><circle cx="3" cy="37" r="2" fill="#fff" /><circle cx="26" cy="34" r="2" fill="#fff" /></Icon>
  ),
  arrowsR: (
    <Icon><path d="M6 6H20M14 1L20 6 14 11" stroke="#e6511c" strokeWidth="4" /><path d="M10 22L20 14M8 38L20 28M12 27H20V34" stroke="#b80f14" strokeWidth="4" /></Icon>
  ),
  arrowsG: (
    <Icon><path d="M14 2L24 12M4 10L16 22M16 12V22H6" stroke="#2fb51f" strokeWidth="4" /><path d="M6 34H20M14 29L20 34 14 39" stroke="#0c4a1f" strokeWidth="4" /></Icon>
  ),
  none: <Icon />,
};

type PanelSpec = { title: string; width: string; groups: React.ReactNode[][]; noPin?: boolean; caption?: string };

/* Each group is a list of columns; every column holds a top and a bottom icon. */
const panels: PanelSpec[] = [
  { title: "Colour", width: "w-[363px]", groups: [[I.cmy, I.cubeR, I.cubeG, I.ball, I.gem, I.gradO, I.gradG, I.gamut], [I.hsl, I.hsv, I.prism, I.none]], caption: "pr-[21px]" },
  { title: "Dimensions", width: "w-[515px]", groups: [[I.tagX, I.tag], [I.dimAligned, I.dimLine, I.dimVert, I.dimArrow, I.dimComb, I.none], [I.dimAngle, I.dimArc, I.dimTri, I.dimCurve], [I.boxes, I.bracket, I.curveDir, I.screenDir]], caption: "pr-[23px]" },
  { title: "Graphs", width: "w-[195px]", groups: [[I.histogram, I.legend, I.donut, I.lines], [I.photos, I.area]], caption: "pr-[22px]" },
  { title: "Preview", width: "w-[271px]", groups: [[I.egg, I.viewBall], [I.blobsCool, I.blobsHot], [I.heartB, I.heartG, I.hearts, I.none]], caption: "pr-[22px]" },
  { title: "Vector", width: "w-[160px]", groups: [[I.digits, I.vectors], [I.arrowsR, I.arrowsG]], noPin: true, caption: "pr-[40px]" },
];

const Panel = ({ p }: { p: PanelSpec }) => (
  <div className={`${p.width} flex h-[145px] shrink-0 flex-col overflow-hidden rounded-[8px] border-2 border-[#b3b4b5] bg-[#8b8c8e] shadow-[inset_0_0_0_1.5px_#56585a]`}>
    <div className="flex h-[115px] shrink-0 pl-[1px] pt-[1px]">
      {p.groups.map((g, gi) => (
        <React.Fragment key={gi}>
          {gi > 0 && (
            <div className="flex w-[20px] shrink-0 items-center justify-center">
              <div className="h-[100px] w-[2px] bg-[linear-gradient(to_bottom,rgba(200,200,200,0),#bdbebf,rgba(200,200,200,0))]" />
            </div>
          )}
          <div className="grid shrink-0 grid-flow-col grid-rows-[56px_56px]">
            {g.map((ic, i) => <React.Fragment key={i}>{ic}</React.Fragment>)}
          </div>
        </React.Fragment>
      ))}
    </div>
    <div className={`relative mx-[1px] flex h-[25px] items-center justify-center bg-[#78797b] pb-[1px] text-[20px] leading-none text-[#343536] ${p.caption}`}>
      {p.title}
      {!p.noPin && (
        <svg className="absolute right-[1px] top-[6px] h-[16px] w-[16px]" viewBox="0 0 16 16" fill="none" stroke="#d2d3d4" strokeWidth="2"><path d="M8 1V12M3 8H13L8 13Z" fill="#d2d3d4" /></svg>
      )}
    </div>
  </div>
);

const ribbonTabs = [
  { label: "Params", cls: "w-[105px]" },
  { label: "Maths", cls: "w-[87px]" },
  { label: "Sets", cls: "w-[72px]" },
  { label: "Vector", cls: "w-[90px]" },
  { label: "Curve", cls: "w-[86px]" },
  { label: "Surface", cls: "w-[105px]" },
  { label: "Mesh", cls: "w-[82px]" },
  { label: "Intersect", cls: "w-[114px]" },
  { label: "Transform", cls: "w-[115px]" },
];

const ribbonTabsAfter = [
  { label: "Pufferfish", cls: "w-[134px] pl-[12px]" },
  { label: "Kangaroo2", cls: "w-[137px]" },
  { label: "LunchBox", cls: "w-[110px]" },
];

const RibbonTab = ({ label, cls }: { label: string; cls: string }) => (
  <div className={`${cls} flex h-[43px] shrink-0 items-center pt-[2px]`}>{label}</div>
);

/* ---------- Node editor: canvas toolbar ---------- */

const ToolButton = ({ children, active, cls = "" }: { children: React.ReactNode; active?: boolean; cls?: string }) => (
  <div className={`${cls} flex h-[38px] w-[64px] shrink-0 items-center justify-center rounded-[6px] border-t shadow-[0_1px_2px_rgba(0,0,0,0.4)] ${active ? "border-[#4c8bea] bg-[#1f66de]" : "border-[#85888a] bg-[#696c6e]"}`}>
    <svg className="h-[30px] w-[30px]" viewBox="0 0 32 32" fill="none">{children}</svg>
  </div>
);

const Rule = ({ cls }: { cls: string }) => <div className={`${cls} h-[32px] w-[2px] shrink-0 bg-[#525658]`} />;

const CanvasBar = () => (
  <div className="flex h-[80px] shrink-0 items-center overflow-hidden bg-[#3b3e40] pb-[2px]">
    <ToolButton cls="ml-[6px]">
      <path d="M8 2H18L23 7V16H8Z" fill="#e9e9e9" stroke="#bbb" /><path d="M4 14L9 13 13 16H21L24 11H28V29H4Z" fill="#72cf3a" stroke="#4e9a28" />
    </ToolButton>
    <ToolButton cls="ml-[16px]">
      <path d="M2 2H30V30H5L2 27Z" fill="#2a6fe6" stroke="#123c96" /><rect x="7" y="2" width="18" height="13" fill="#e6e6e6" /><path d="M9 6H23M9 10H23" stroke="#aaa" /><rect x="9" y="20" width="14" height="10" fill="#d4d4d4" /><rect x="11" y="22" width="4" height="8" fill="#1a4cab" />
    </ToolButton>
    <Rule cls="ml-[14px]" />
    <div className="ml-[10px] flex h-[38px] w-[94px] shrink-0">
      <div className="flex w-[60px] items-center justify-center border-y border-[#55585a] border-b-[#85888a] bg-[#444748] pr-[2px] font-['Inter',sans-serif] text-[22.500px] tracking-[-1px] text-[#ececec]">34%</div>
      <div className="flex w-[34px] items-center justify-center rounded-r-[6px] bg-[#1f66de]">
        <svg className="h-[16px] w-[18px]" viewBox="0 0 18 16" fill="none" stroke="#fff" strokeWidth="2.200" strokeLinecap="round"><path d="M3 4L9 11 15 4" /></svg>
      </div>
    </div>
    <ToolButton cls="ml-[18px]">
      <path d="M3 11V3H11M21 3H29V11M29 21V29H21M11 29H3V21" stroke="#1d1d1d" strokeWidth="5.500" /><path d="M12.500 12.500L19.500 19.500M19.500 12.500L12.500 19.500" stroke="#1d1d1d" strokeWidth="3.500" />
    </ToolButton>
    <ToolButton cls="ml-[34px]">
      <path d="M2 16Q16 0 30 16Q16 31 2 16Z" fill="#e4e9ec" stroke="#34393c" strokeWidth="1.500" /><circle cx="16" cy="16" r="8" fill="#6cc5ee" stroke="#1f6d9c" /><circle cx="16" cy="16" r="3.500" fill="#0c2030" /><circle cx="14" cy="13" r="1.500" fill="#fff" />
    </ToolButton>
    <ToolButton cls="ml-[32px]">
      <path d="M4 16Q11 12 9 20T5 27Q10 31 17 28" stroke="#4a1414" strokeWidth="2.400" /><path d="M29 2L30 18L22 26 14 18Z" fill="#e8353a" stroke="#8c1318" /><path d="M15 18L22 25 14 29Z" fill="#f2c22e" />
    </ToolButton>
    <ToolButton cls="ml-[496px]">
      <path d="M9 8L16 2 23 5 24 15Q16 20 8 15Z" fill="#ededed" stroke="#999" /><ellipse cx="16" cy="22" rx="10" ry="7" fill="#262626" stroke="#b5b5b5" />
    </ToolButton>
    <ToolButton cls="ml-[14px]">
      <path d="M2 16L8 5 17 2 29 8 30 14 24 26 14 30 4 25ZM8 5L17 10 22 18 14 30M3 18Q10 16 13 26M18 4Q26 7 24 17" stroke="#3e4143" strokeWidth="2.600" strokeLinejoin="round" />
    </ToolButton>
    <ToolButton cls="ml-[14px]" active>
      <path d="M2 16L9 4 18 2 30 9V16L25 25 15 30 3 22Z" fill="#cf1f22" stroke="#7c0d10" strokeWidth="1.500" /><ellipse cx="22" cy="8" rx="6" ry="3.500" fill="#8a0f12" transform="rotate(25 22 8)" /><path d="M8 10L5 18" stroke="#ff8a85" strokeWidth="3" strokeLinecap="round" />
    </ToolButton>
    <Rule cls="ml-[20px]" />
    <ToolButton cls="ml-[20px]">
      <path d="M2 11L18 29 10 30 1 20Z" fill="#e4e4e4" /><path d="M8 8L16 2 27 5 31 14 26 23Z" fill="#5cae2a" stroke="#2d6b12" /><ellipse cx="18" cy="9" rx="5" ry="4" fill="#b8e08d" /><path d="M4 5L27 29" stroke="#1d1d1d" strokeWidth="2" />
    </ToolButton>
    <ToolButton cls="ml-[12px]">
      <path d="M16 3A12 13 0 0 0 16 29Z" fill="#f08a2c" stroke="#a85010" /><path d="M16 3A12 13 0 0 1 16 29Z" fill="#e6e4e2" stroke="#999" />
    </ToolButton>
    <Rule cls="ml-[10px]" />
    <ToolButton cls="ml-[10px]">
      <circle cx="19" cy="16" r="13" fill="#bfe3fa" stroke="#2a6fc9" strokeWidth="3" />
    </ToolButton>
  </div>
);

/* ---------- Node editor: graph ---------- */

const OX = 1058;
const OY = 302;

type NodeSpec = { x: number; y: number; w: number; h: number; bar?: number; light?: boolean };

const nodes: NodeSpec[] = [
  { x: 1213.5, y: 471, w: 35, h: 15 },
  { x: 1299, y: 451, w: 96.500, h: 55, bar: 31 },
  { x: 1430.5, y: 439.500, w: 69.500, h: 64, bar: 26 },
  { x: 2042, y: 463, w: 98, h: 86, bar: 38 },
  { x: 2199, y: 549, w: 88, h: 58, bar: 47, light: true },
  { x: 1561.5, y: 776, w: 102, h: 76, bar: 41.500 },
  { x: 1734, y: 776, w: 72, h: 31, bar: 28 },
  { x: 1854, y: 778, w: 34.500, h: 14.500 },
  { x: 1931, y: 767, w: 98, h: 86, bar: 38 },
  { x: 1558, y: 1074, w: 103, h: 76, bar: 42 },
  { x: 1740, y: 1072, w: 71, h: 31, bar: 27 },
  { x: 1859.500, y: 1074, w: 34.500, h: 14.500 },
  { x: 1936.5, y: 1063, w: 97.500, h: 86, bar: 37.500 },
];

const sliders = [
  { x: 1873, y: 488 },
  { x: 2037, y: 622 },
  { x: 1546.5, y: 862 },
  { x: 1697.5, y: 891 },
  { x: 1552.500, y: 1159 },
  { x: 1697.5, y: 1188 },
];

/* [x0, y0, x1, y1, handle length] */
const wires: [number, number, number, number, number][] = [
  [1248, 479, 1300, 479, 20],
  [1395.5, 465.700, 1431, 471, 18],
  [1395.5, 491, 1431, 491, 18],
  [1500, 471, 2042, 475, 270],
  [1500, 471, 2199, 585, 350],
  [1500, 471, 1562, 795, 240],
  [1500, 471, 1558.5, 1093, 462],
  [1519, 851.5, 1562, 831.500, 22],
  [1513, 1173.5, 1558.5, 1130, 26],
  [1663.5, 784.5, 1734.5, 784.5, 30],
  [1681.5, 869, 1734.5, 797.700, 45],
  [1806, 791, 1854, 785, 24],
  [1888, 785, 1931, 779, 22],
  [1833, 898, 1931, 799, 62],
  [2028.5, 810, 2199, 557.500, 178],
  [2034, 1106, 2199, 557.500, 408],
  [2140, 506.500, 2199, 557.500, 34],
  [2172, 629, 2199, 571.500, 38],
  [2008, 495.500, 2042, 495.500, 15],
  [1660.5, 1082.500, 1740.500, 1080.500, 35],
  [1687.5, 1165.700, 1740.500, 1094.300, 45],
  [1811, 1087, 1860, 1081, 24],
  [1894, 1081, 1937, 1075, 22],
  [1832.5, 1195, 1937, 1095.500, 62],
];

const GraphNode = ({ n }: { n: NodeSpec }) => (
  <div
    className={`absolute rounded-[3px] border-[1.5px] shadow-[0_1px_1px_rgba(0,0,0,0.3)] ${n.light ? "border-[#5a5a5a] bg-[linear-gradient(to_bottom,#d2d2d2,#c6c6c6)]" : "border-[#4b4b52] bg-[linear-gradient(to_bottom,#9291a0,#8b8a98)]"}`}
    style={{ left: n.x - OX, top: n.y - OY, width: n.w, height: n.h }}
  >
    {n.bar !== undefined && <div className="absolute inset-y-0 w-[17px] rounded-[2px] border border-[#141414] bg-[#333333]" style={{ left: n.bar - 1 }} />}
  </div>
);

const Slider = ({ x, y }: { x: number; y: number }) => (
  <div className="absolute flex h-[14.500px] w-[135.500px] overflow-hidden rounded-[3px] border-[1.5px] border-[#5c5c5e] bg-[linear-gradient(to_bottom,#d0d0cf,#c6c6c6)] shadow-[0_1px_1px_rgba(0,0,0,0.3)]" style={{ left: x - OX, top: y - OY }}>
    <div className="w-[53px] border-r border-[#4b4b52] bg-[#8f8e9d]" />
  </div>
);

const ticks = [1, 2, 3, 4, 5, 6, 7, 8, 9];

const PadSlider = ({ x, y, px, py, label, fill, lx, ly, lw }: { x: number; y: number; px: number; py: number; label: string; fill?: boolean; lx: number; ly: number; lw: number }) => (
  <svg className="absolute h-[138px] w-[138px]" style={{ left: x - OX, top: y - OY }} viewBox="0 0 138 138" fill="none">
    <rect x="0.500" y="0.500" width="135" height="135" rx="3" fill="#8c8b9a" stroke="#4c4c54" strokeWidth="1.500" />
    <rect x="4" y="4" width="128" height="128" fill="url(#padFill)" stroke="#3b3b42" strokeWidth="1.600" />
    <rect x="5.800" y="5.800" width="124.400" height="124.400" stroke="#77777f" strokeWidth="2" opacity=".55" />
    <rect x="8" y="8" width="120" height="120" stroke="#96969d" strokeWidth="2.400" opacity=".45" />
    <path d={ticks.map((t) => `M${12 + t * 11.1} 12V123M12 ${12 + t * 11.1}H123`).join("")} stroke="#8f8f98" strokeWidth=".8" opacity=".6" />
    {fill && <rect x="12" y={py} width={px - 12} height={123 - py} fill="url(#padWhite)" fillOpacity=".8" stroke="#222" strokeWidth="1" />}
    <rect x="12" y="12" width="111" height="111" stroke="#4b4b50" strokeWidth="1" strokeDasharray="1.500 1.500" />
    <path d={`M5 ${py - 3.500}L11.500 ${py} 5 ${py + 3.500}ZM${px - 3.500} 129.500L${px} 123 ${px + 3.500} 129.500Z`} fill="#000" />
    <rect x={lx} y={ly} width={lw} height="10.500" fill="#f2f2f2" stroke="#555" strokeWidth="1.200" />
    <path d={`M${px - 3} ${ly + 10}H${px + 3}L${px} ${py - 1}Z`} fill="#f2f2f2" />
    <circle cx={px} cy={py} r="2.800" fill="#fff" stroke="#000" strokeWidth="1.400" />
    <text x={lx + 1.500} y={ly + 8} fontSize="7.500" fontFamily="Liberation Mono, monospace" textLength={lw - 3} fill="#333">{label}</text>
  </svg>
);

const Compass = () => (
  <svg className="absolute left-[1412px] top-[964px] h-[90px] w-[82px] overflow-hidden" viewBox="510 90 246 270" fill="none">
    <path d="M552 220Q550 165 605 132L640 112" stroke="#000" strokeWidth="18" strokeLinecap="round" />
    <path d="M596 124L625 102Q640 96 648 106L655 115 600 140Z" fill="#000" />
    <path d="M519 121L564 121 569 154 536 160Z" fill="#000" />
    <circle cx="680" cy="230" r="121" fill="#fff" stroke="#2a2a2a" strokeWidth="4" />
    <circle cx="680" cy="230" r="107" fill="url(#compass)" />
    <path d="M572 182Q580 165 595 152L612 184ZM722 124L760 145 724 162ZM603 308L635 293 631 326ZM743 272H760V300Z" fill="#fff" />
  </svg>
);

const Canvas = () => (
  <div className="relative h-[1139px] shrink-0 overflow-hidden bg-[#d4cfc8]">
    <div className="absolute inset-0 border-l-[50px] border-t-[46px] border-[#d0cbc4]">
      <div className="h-full w-full border-l border-t border-[#111]" />
    </div>
    <svg className="absolute inset-0 h-full w-full" viewBox="1058 302 1494 1139" fill="none" stroke="#000" strokeOpacity=".62" strokeWidth="1.900">
      {wires.map(([a, b, c, d, k], i) => (
        <path key={i} d={`M${a} ${b}C${a + k} ${b} ${c - k} ${d} ${c} ${d}`} />
      ))}
    </svg>
    {nodes.map((n, i) => <GraphNode key={i} n={n} />)}
    {sliders.map((s, i) => <Slider key={i} x={s.x} y={s.y} />)}
    <PadSlider x={1383.5} y={783.5} px={100} py={37.500} label="0.79 ; 0.77" fill lx={74.500} ly={23} lw={48.500} />
    <PadSlider x={1378} y={1105.5} px={12} py={104} label="0.0 ; 0.17" lx={12.500} ly={90} lw={45} />
    <Compass />
    <div className="absolute bottom-0 left-0 flex h-[55px] w-[126px] items-center border-2 border-l-0 border-[#111] bg-[linear-gradient(to_bottom,#ececec_0%,#cfcfcf_40%,#b0b0b0_45%,#a3a3a3_100%)]">
      <svg className="ml-[2px] h-[46px] w-[46px]" viewBox="0 0 46 46" fill="none">
        <path d="M29 10H42Q42 20 38 28Q37 34 37 41H13Q13 32 21 26Q28 20 29 10Z" fill="#fb9328" stroke="#921010" strokeWidth="2" />
        <path d="M6 41Q7 30 14 24Q21 18 21 10M18 10H26M3 41H10M29 3H41M29 0V6M41 0V6" stroke="#111" strokeWidth="2" />
      </svg>
      <svg className="ml-[12px] h-[46px] w-[48px]" viewBox="0 0 48 46" fill="none">
        <path d="M13 2H35L47 23 35 44H13L1 23Z" fill="#2c2c2c" stroke="#0a0a0a" strokeWidth="2" />
        <path d="M16 6H32L42 23 32 40H16L6 23Z" fill="#333" stroke="#6a6a6a" />
        <path d="M19 10L33 7V38L22 31 9 27V20Z" fill="#c9c9c9" stroke="#333" /><path d="M20 10V30M27 9V34M10 23H33M15 14V28" stroke="#777" />
      </svg>
      <div className="ml-auto h-full w-[11px] bg-[linear-gradient(to_bottom,#bdbdbd_40%,#7d7d7d_45%)]" />
    </div>
    <div className="pointer-events-none absolute inset-x-0 top-0 h-[10px] bg-[linear-gradient(to_bottom,rgba(120,110,100,0.12),rgba(0,0,0,0))]" />
  </div>
);

const EditorWindow = () => (
  <section className="flex h-full min-w-0 flex-1 flex-col overflow-hidden border-l-2 border-[#7b7e80] bg-[#3b3e40] font-['Liberation_Sans',sans-serif]">
    <div className="flex h-[47px] shrink-0 items-end border-b-2 border-t-2 border-b-[#595c5d] border-t-[#151515] bg-[#6a6e6f] pl-[10px] text-[23px] leading-none text-[#b5b7b8]">
      {ribbonTabs.map((t) => <RibbonTab key={t.label} {...t} />)}
      <div className="z-10 -mb-[2px] flex h-[45px] w-[100px] shrink-0 items-center rounded-t-[12px] border-2 border-b-0 border-[#55585a] bg-[#8b8c8e] pb-[6px] pl-[10px] text-white">Display</div>
      {ribbonTabsAfter.map((t) => <RibbonTab key={t.label} {...t} />)}
    </div>
    <div className="flex h-[153px] shrink-0 gap-[9px] border-b-2 border-[#77797b] bg-[linear-gradient(to_bottom,#8b8c8e,#929395)] pl-[5px] pt-[5px]">
      {panels.map((p) => <Panel key={p.title} p={p} />)}
    </div>
    <div className="h-[22px] shrink-0 border-b-2 border-[#67696b] bg-[#3b3e40]" />
    <CanvasBar />
    <Canvas />
    <div className="relative flex h-[35px] shrink-0 items-start overflow-hidden border-t-2 border-[#67696b] bg-[#3b3e40] font-['Inter',sans-serif] text-[23.500px] leading-[30px] text-[#e2e3e3]">
      <svg className="ml-[7px] mt-[15px] h-[30px] w-[30px] shrink-0" viewBox="0 0 30 30">
        <circle cx="15" cy="15" r="14" fill="#1467c9" stroke="#0a2f8f" strokeWidth="2" /><ellipse cx="15" cy="10" rx="9" ry="7" fill="#49b7f3" /><path d="M15 5V19" stroke="#fff" strokeWidth="4.500" strokeLinecap="round" />
      </svg>
      <div className="ml-[5px] mt-[15px] whitespace-pre">Save successfully completed...  (23 seconds ago)</div>
      <div className="ml-auto mr-[59px] mt-[15px] text-[24px]">1.0.0007</div>
    </div>
  </section>
);

const Gradients = () => (
  <svg className="absolute h-0 w-0">
    <defs>
      <linearGradient id="blueSheen"><stop offset="0" stopColor="#a9b8ff" /><stop offset="1" stopColor="#5f7bf5" /></linearGradient>
      <linearGradient id="metal"><stop offset="0" stopColor="#f2f2f2" /><stop offset="1" stopColor="#777" /></linearGradient>
      <radialGradient id="ball" cx=".4" cy=".35"><stop offset="0" stopColor="#fff" /><stop offset="1" stopColor="#a6a6a6" /></radialGradient>
      <linearGradient id="cubeG" x1="0" y1="0" x2="1" y2="1"><stop offset="0" stopColor="#38d08a" /><stop offset=".45" stopColor="#8fb5a3" /><stop offset="1" stopColor="#151a18" /></linearGradient>
      <linearGradient id="cubeGTop"><stop offset="0" stopColor="#2a3ee0" /><stop offset="1" stopColor="#f2f4ff" /></linearGradient>
      <linearGradient id="cubeR" x1="0" y1="0" x2="1" y2="1"><stop offset="0" stopColor="#e8464a" /><stop offset=".4" stopColor="#c79a90" /><stop offset="1" stopColor="#1c1414" /></linearGradient>
      <linearGradient id="cubeRTop"><stop offset="0" stopColor="#a5cf3c" /><stop offset="1" stopColor="#fbf7ea" /></linearGradient>
      <radialGradient id="redBall" cx=".55" cy=".75"><stop offset="0" stopColor="#f9b0a8" /><stop offset=".6" stopColor="#d3151d" /><stop offset="1" stopColor="#a00c12" /></radialGradient>
      <linearGradient id="gradG" x1="0" y1="0" x2="1" y2="0"><stop offset="0" stopColor="#12852c" /><stop offset=".6" stopColor="#8fd63a" /><stop offset="1" stopColor="#6fa83a" /></linearGradient>
      <linearGradient id="gradO" x1="0" y1="0" x2="0" y2="1"><stop offset="0" stopColor="#f43a68" /><stop offset=".45" stopColor="#f9c2a8" /><stop offset="1" stopColor="#f58a1f" /></linearGradient>
      <linearGradient id="gradB"><stop offset="0" stopColor="#69b3f2" /><stop offset="1" stopColor="#f6d9dc" /></linearGradient>
      <linearGradient id="gamut" x1="0" y1="0" x2=".8" y2="1"><stop offset="0" stopColor="#08b52c" /><stop offset=".35" stopColor="#35e0b0" /><stop offset=".6" stopColor="#f5e34a" /><stop offset="1" stopColor="#ef2a2a" /></linearGradient>
      <linearGradient id="areaFill"><stop offset="0" stopColor="#e6cfae" /><stop offset="1" stopColor="#fb9a12" /></linearGradient>
      <linearGradient id="tile" x1="0" y1="0" x2="1" y2="1"><stop offset="0" stopColor="#8f8f8f" /><stop offset="1" stopColor="#f5f5f5" /></linearGradient>
      <linearGradient id="legend" x1="0" y1="0" x2="0" y2="1"><stop offset="0" stopColor="#fb7b1d" /><stop offset=".55" stopColor="#f3ee25" /><stop offset="1" stopColor="#3fd92c" /></linearGradient>
      <linearGradient id="egg" x1=".7" y1="0" x2=".3" y2="1"><stop offset="0" stopColor="#fba52c" /><stop offset=".5" stopColor="#f57c5c" /><stop offset="1" stopColor="#f3387d" /></linearGradient>
      <pattern id="checker" width="6" height="6" patternUnits="userSpaceOnUse"><rect width="6" height="6" fill="#8fc0f2" /><path d="M0 0H3V3H0ZM3 3H6V6H3Z" fill="#1e3fa8" /></pattern>
      <linearGradient id="padFill" x1="0" y1="0" x2="0" y2="1"><stop offset="0" stopColor="#c2c2c6" /><stop offset="1" stopColor="#bebecb" /></linearGradient>
      <linearGradient id="padWhite" x1="1" y1="0" x2="0" y2="1"><stop offset="0" stopColor="#fff" /><stop offset=".5" stopColor="#fbfbfc" /><stop offset="1" stopColor="#cfcfd8" /></linearGradient>
      <radialGradient id="compass"><stop offset="0" stopColor="#ececec" /><stop offset=".6" stopColor="#a8a8a8" /><stop offset="1" stopColor="#868686" /></radialGradient>
    </defs>
  </svg>
);

export default function App() {
  return (
    <main className="relative flex h-[1476px] w-[2552px] overflow-hidden bg-[#343839]">
      <Gradients />
      <ModelWindow />
      <EditorWindow />
    </main>
  );
}
